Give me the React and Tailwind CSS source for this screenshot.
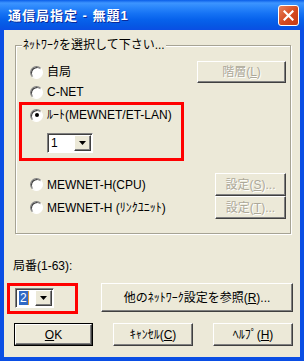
import React from "react";

const raised =
  "bg-[#ece9d8] border border-t-white border-l-white border-b-[#404040] border-r-[#404040] shadow-[inset_-1px_-1px_0_#808080]";

function Btn({ children, className = "", disabled = false }) {
  return (
    <div
      className={`${raised} flex items-center justify-center ${
        disabled ? "text-[#aca899] [text-shadow:1px_1px_0_#fff]" : "text-black"
      } ${className}`}
    >
      {children}
    </div>
  );
}

function Radio({ checked, label }) {
  return (
    <div className="flex items-center gap-[4px]">
      <div className="w-[13px] h-[13px] rounded-full border border-t-[#808080] border-l-[#808080] border-b-white border-r-white bg-white shadow-[inset_1px_1px_0_#404040] flex items-center justify-center">
        {checked && <div className="w-[4px] h-[4px] rounded-full bg-black" />}
      </div>
      <span className="text-black whitespace-nowrap">{label}</span>
    </div>
  );
}

function Combo({ width, children }) {
  return (
    <div
      className={`${width} h-[20px] flex border border-t-[#808080] border-l-[#808080] border-b-white border-r-white shadow-[inset_1px_1px_0_#404040] bg-white p-[1px]`}
    >
      <div className="flex-1 flex items-center pl-[2px]">{children}</div>
      <div className={`${raised} w-[17px] flex items-center justify-center`}>
        <svg width="7" height="4" viewBox="0 0 7 4">
          <path d="M0 0h7L3.5 4z" fill="#000" />
        </svg>
      </div>
    </div>
  );
}

export default function App() {
  return (
    <div className="relative w-[304px] h-[361px] flex flex-col bg-[#0a4ee4] font-['Liberation_Sans','Noto_Sans_CJK_JP',sans-serif] text-[12px] leading-none">
      {/* title bar */}
      <div className="h-[30px] flex items-center justify-between pl-[8px] pr-[5px] bg-[linear-gradient(to_bottom,#0a5de8_0%,#3d95ff_10%,#2a86fb_25%,#1572f4_45%,#0762ec_65%,#0658e4_85%,#0a4ee4_100%)]">
        <span className="text-white font-bold text-[13px] tracking-[1px] [text-shadow:1px_1px_0_#0a2a9a]">
          通信局指定 - 無題1
        </span>
        <div className="w-[21px] h-[21px] rounded-[3px] border border-white bg-[linear-gradient(135deg,#e8815b,#d4491f_55%,#c53a14)] flex items-center justify-center">
          <svg width="11" height="11" viewBox="0 0 11 11">
            <path d="M1.5 1.5l8 8M9.5 1.5l-8 8" stroke="#fff" strokeWidth="2.2" strokeLinecap="square" />
          </svg>
        </div>
      </div>

      {/* client area */}
      <div className="flex-1 mx-[4px] mb-[4px] bg-[#ece9d8] flex flex-col">
        <div className="relative mt-[15px] ml-[11px] w-[276px] h-[189px] border border-[#a6a394] shadow-[inset_1px_1px_0_#fff,1px_1px_0_#fff] flex flex-col pl-[14px] pr-[4px] pt-[15px]">
          <span className="absolute -top-[7px] left-[6px] bg-[#ece9d8] px-[1px] text-black">
            ﾈｯﾄﾜｰｸを選択して下さい...
          </span>
          <div className="h-[22px] flex items-center justify-between">
            <Radio label="自局" />
            <Btn disabled className="w-[89px] h-[22px]">
              階層(<u>L</u>)
            </Btn>
          </div>
          <div className="h-[18px] flex items-center">
            <Radio label="C-NET" />
          </div>
          <div className="h-[18px] mt-[5px] flex items-center">
            <Radio checked label="ﾙｰﾄ(MEWNET/ET-LAN)" />
          </div>
          <div className="mt-[9px] ml-[17px]">
            <Combo width="w-[46px]">1</Combo>
          </div>
          <div className="h-[23px] mt-[20px] flex items-center justify-between">
            <Radio label="MEWNET-H(CPU)" />
            <Btn disabled className="w-[71px] h-[23px]">
              設定(<u>S</u>)...
            </Btn>
          </div>
          <div className="h-[23px] flex items-center justify-between">
            <Radio label="MEWNET-H (ﾘﾝｸﾕﾆｯﾄ)" />
            <Btn disabled className="w-[71px] h-[23px]">
              設定(<u>T</u>)...
            </Btn>
          </div>
        </div>

        <div className="mt-[25px] ml-[9px] h-[14px] flex items-center text-black">局番(1-63):</div>

        <div className="mt-[10px] h-[29px] flex items-center">
          <div className="ml-[11px]">
            <Combo width="w-[39px]">
              <span className="bg-[#316ac5] text-white px-[1px] leading-[14px]">2</span>
              <span className="w-[1px] h-[14px] bg-[#d89a3c]" />
            </Combo>
          </div>
          <Btn className="ml-[47px] w-[192px] h-[29px]">
            他のﾈｯﾄﾜｰｸ設定を参照(<u>R</u>)...
          </Btn>
        </div>

        <div className="mt-[11px] flex items-center">
          <div className="ml-[10px] w-[79px] h-[23px] border border-black">
            <Btn className="w-full h-full">
              <u>O</u>K
            </Btn>
          </div>
          <Btn className="ml-[20px] w-[80px] h-[23px]">
            ｷｬﾝｾﾙ(<u>C</u>)
          </Btn>
          <Btn className="ml-[20px] w-[80px] h-[23px]">
            ﾍﾙﾌﾟ(<u>H</u>)
          </Btn>
        </div>
      </div>

      {/* red annotation boxes */}
      <div className="absolute left-[19px] top-[102px] w-[165px] h-[59px] border-[3px] border-[#ff0000]" />
      <div className="absolute left-[7px] top-[283px] w-[71px] h-[31px] border-[3px] border-[#ff0000]" />
    </div>
  );
}
